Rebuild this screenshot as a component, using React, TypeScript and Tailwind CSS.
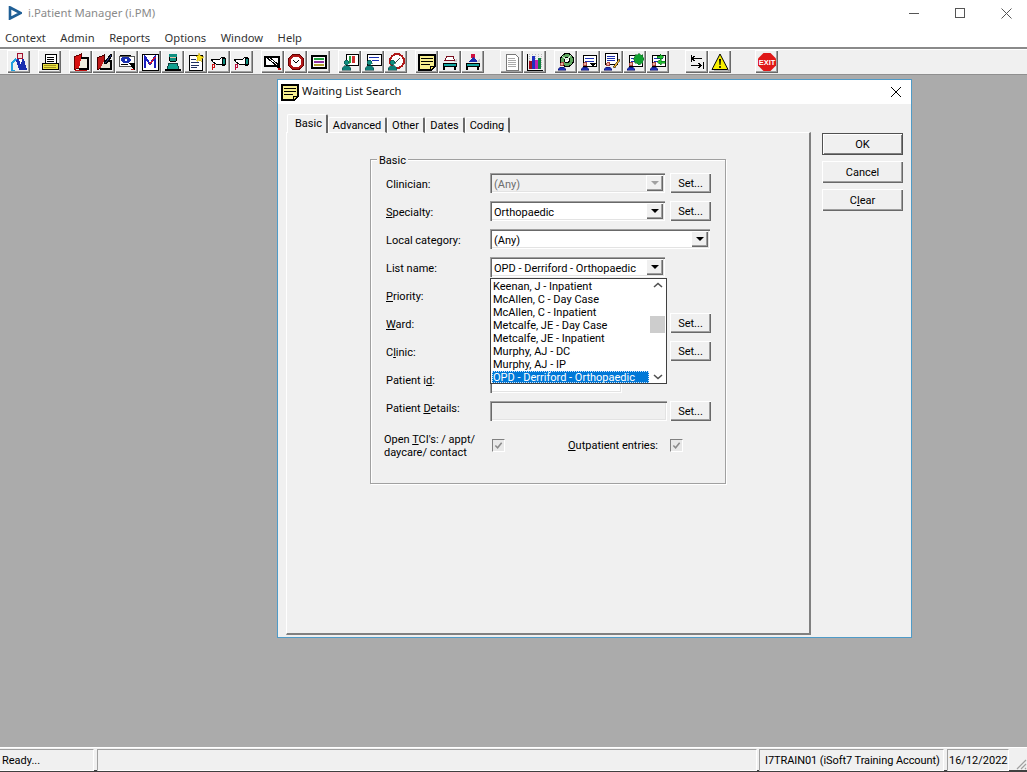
import React from "react";

const FONT = "font-['Roboto',sans-serif] text-[11px] leading-[13px] text-black";
const RAISED = "shadow-[inset_1px_1px_0_#fff,inset_-1px_-1px_0_#696969,inset_-2px_-2px_0_#a0a0a0]";
const SUNKEN = "shadow-[inset_1px_1px_0_#a0a0a0,inset_2px_2px_0_#696969,inset_-1px_-1px_0_#fff,inset_-2px_-2px_0_#e3e3e3]";

const S = ({ children }: { children: React.ReactNode }) => (
  <svg viewBox="0 0 18 18" width="18" height="18" className="block" shapeRendering="crispEdges">{children}</svg>
);
const Teal = () => (
  <g>
    <circle cx="5.5" cy="9.5" r="2.5" fill="#0f8f80" stroke="#0b3d3d" strokeWidth=".5" />
    <path d="M1 17c0-3 2-4.500 4.500-4.500S10 14 10 17z" fill="#0f7f78" stroke="#0b3d3d" strokeWidth=".5" />
  </g>
);
const BlueP = () => (
  <g>
    <circle cx="5" cy="11" r="2" fill="#e8b0a0" stroke="#800000" strokeWidth=".6" />
    <path d="M1 17c0-2 2-3 4-3s4 1 4 3z" fill="#1a2fb0" stroke="#000060" strokeWidth=".5" />
  </g>
);
const Form = () => (
  <g>
    <rect x="3" y="2" width="13" height="11" fill="#fff" stroke="#000" />
    <path d="M5 5h9M5 8h9" stroke="#1a2fb0" />
  </g>
);
const Hand = ({ c }: { c: string }) => (
  <g>
    <path d="M1 6h9l2-2h2v8h-2l-2-1H6L3 9z" fill="#fff" stroke="#000" />
    <rect x="12" y="5" width="3" height="6" fill="#0f8f80" stroke="#000" />
    <path d="M2 11v6M2 11h2v3H2" stroke={c} fill="none" />
  </g>
);
const Bed = () => (
  <g>
    <path d="M2 10h13v3H2z" fill="#12a5a0" stroke="#000" />
    <path d="M3 13v4M14 13v4" stroke="#000" strokeWidth="1.500" />
    <path d="M12 9l4-3v3z" fill="#c8c8c8" />
  </g>
);

const icons: React.ReactNode[] = [
  <S><rect x="7" y="0" width="5" height="5" fill="#f4dcdc" stroke="#a01030" /><path d="M5 6h9l3 11H9L7 10z" fill="#1a2fb0" /><path d="M9 6h3l-1 6z" fill="#fff" /><path d="M2 17V10l4-4" stroke="#22a0e0" fill="none" strokeWidth="1.500" /><path d="M1 17h4" stroke="#22a0e0" /></S>,
  <S><rect x="4" y="1" width="11" height="9" fill="#fff" stroke="#000" /><path d="M6 4h7M6 6h7M6 8h7" stroke="#000" /><path d="M1 10h16v6H1z" fill="#e8e040" stroke="#000" /><path d="M3 12h12M3 14h12" stroke="#a09020" /></S>,
  <S><path d="M2 4l7-3v13l-7 3z" fill="#d81010" stroke="#600" /><path d="M9 5h7v11H7" fill="#f0f0e0" stroke="#000" strokeWidth="1.500" /><path d="M3 17h12" stroke="#c01010" /></S>,
  <S><path d="M2 5l7-3v12l-7 3z" fill="#c01818" stroke="#400" /><path d="M9 8h7v8H5" fill="#e8e0d0" stroke="#000" strokeWidth="1.500" /><path d="M9 10l7-9 1 2-6 8z" fill="#203070" stroke="#000" /></S>,
  <S><rect x="1" y="3" width="15" height="10" fill="#fff" stroke="#555" /><ellipse cx="8" cy="7" rx="5" ry="3.500" fill="#1a2fb0" /><circle cx="8" cy="7" r="1.500" fill="#fff" /><path d="M2 2h11M3 11h7M11 10h5v7" stroke="#000" /><path d="M13 16h3" stroke="#d01010" /></S>,
  <S><rect x="1" y="1" width="16" height="16" fill="#fff" stroke="#000" /><path d="M4 15V4l5 7 5-7v11" fill="none" stroke="#1a20c0" strokeWidth="2" /><path d="M9 11l5-7" stroke="#d01030" strokeWidth="1.500" /></S>,
  <S><circle cx="9" cy="5" r="4" fill="#e8c0a8" stroke="#000" /><rect x="5" y="1" width="8" height="3" fill="#0f8f80" /><rect x="6" y="5" width="6" height="3" fill="#0f8f80" /><path d="M3 16l2-6h8l2 6z" fill="#12a090" stroke="#0b3d3d" /><path d="M1 17h16" stroke="#000" strokeWidth="1.500" /></S>,
  <S><rect x="2" y="2" width="13" height="15" fill="#fff" stroke="#000" /><path d="M4 6h5M4 9h8M4 12h8M4 14h6" stroke="#203060" /><path d="M12 0l1.500 3 3.500 1-3 2 .5 3-3-2-2 1 1-3-2-2 3-.5z" fill="#f8e020" stroke="#c0a000" strokeWidth=".5" /></S>,
  <S><Hand c="#d01010" /></S>,
  <S><Hand c="#c01040" /></S>,
  <S><path d="M1 4h14v9H1z" fill="#fff" stroke="#000" strokeWidth="1.500" /><path d="M2 4l11 9M4 3l12 10" stroke="#000" /><path d="M13 13l3 3" stroke="#000" strokeWidth="1.500" /><rect x="14" y="15" width="3" height="2" fill="#d01010" /></S>,
  <S><circle cx="9" cy="9" r="8" fill="#b01818" stroke="#600" /><circle cx="9" cy="9" r="5.500" fill="#fff" /><path d="M6 7l3 3 3-3" fill="none" stroke="#000" shapeRendering="auto" /></S>,
  <S><rect x="2" y="3" width="14" height="12" fill="#fff" stroke="#000" strokeWidth="1.500" /><rect x="4" y="5" width="10" height="2" fill="#20a040" /><rect x="4" y="8" width="10" height="2" fill="#9030a0" /><rect x="4" y="11" width="10" height="2" fill="#b0a030" /></S>,
  <S><rect x="5" y="1" width="12" height="11" fill="#fff" stroke="#000" /><rect x="8" y="3" width="2" height="7" fill="#20a040" /><rect x="11" y="3" width="3" height="7" fill="#d03030" /><Teal /></S>,
  <S><rect x="3" y="1" width="14" height="11" fill="#fff" stroke="#000" /><path d="M5 4h10M8 7h7" stroke="#1a2fb0" /><Teal /></S>,
  <S><circle cx="10" cy="8" r="7" fill="#fff" stroke="#b01818" strokeWidth="2" /><path d="M8 10l5-5" stroke="#404040" strokeWidth="1.200" /><Teal /></S>,
  <S><path d="M1 2h16v11l-4 4H1z" fill="#f8f090" stroke="#000" strokeWidth="1.500" /><path d="M3 5h12M3 8h12M3 11h9" stroke="#000" /><path d="M12 17v-4h5" fill="#f0e060" stroke="#000" /></S>,
  <S><path d="M5 5V3h7v2l2 2H4z" fill="#fff" stroke="#7a1020" /><Bed /></S>,
  <S><circle cx="9" cy="3" r="2.500" fill="#d01040" /><path d="M4 9l5-5 5 5z" fill="#1a2fb0" /><Bed /></S>,
  <S><path d="M3 1h9l3 3v13H3z" fill="#fff" stroke="#777" /><path d="M5 5h7M5 7h8M5 9h8M5 11h8M5 13h8" stroke="#aaa" /></S>,
  <S><path d="M1 1v16h16" stroke="#000" fill="none" /><path d="M3 1v14M6 1v14M9 1v14M12 1v14M15 1v14" stroke="#bbb" strokeDasharray="1 1" /><rect x="3" y="8" width="3" height="8" fill="#a01020" /><rect x="6" y="3" width="3" height="13" fill="#2030c0" /><rect x="9" y="7" width="3" height="9" fill="#c020b0" /><rect x="12" y="5" width="3" height="11" fill="#108040" /></S>,
  <S><circle cx="10" cy="7" r="6.500" fill="#60a860" stroke="#000" /><circle cx="10" cy="7" r="2.500" fill="#fff" stroke="#000" /><path d="M5 3l5 4 4-5" stroke="#c8e8c8" fill="none" /><BlueP /></S>,
  <S><Form /><path d="M9 10h7l-3 4z" fill="#000" /><BlueP /></S>,
  <S><rect x="2" y="0" width="12" height="11" fill="#fff" stroke="#000" /><path d="M4 3h8M4 5h8M4 7h8" stroke="#1a2fb0" /><path d="M10 14l6-8 1 1-5 8z" fill="#e8b030" stroke="#000" strokeWidth=".5" /><BlueP /></S>,
  <S><Form /><path d="M13 0l1.500 2 2-.5.5 2.500 1 2-1 2-.5 2-2 .5-1.500 1.500-2-1.500-2-.5-.5-2-1-2 1-2 .5-2.500 2 .5z" fill="#10a030" stroke="#106020" strokeWidth=".5" /><BlueP /></S>,
  <S><Form /><path d="M11 1l4 3-4 3V5H8V3h3z" fill="#20c030" stroke="#006010" strokeWidth=".5" /><path d="M12 6L8 9l4 3v-2h4V8h-4z" fill="#20c030" stroke="#006010" strokeWidth=".5" /><BlueP /></S>,
  <S><path d="M3 2v7M3 5.500h11M3 5.500l4-2.500M3 5.500l4 2.500" stroke="#000" fill="none" /><path d="M15 9v7M3 12.500h11M14 12.500l-4-2.500M14 12.500l-4 2.500" stroke="#000" fill="none" /></S>,
  <svg viewBox="0 0 18 18" width="18" height="18" className="block"><path d="M9 1l8 15.500H1z" fill="#f8f000" stroke="#000" /><path d="M8 6h2l-.5 6h-1z" fill="#000" /><circle cx="9" cy="14" r="1" fill="#000" /><path d="M17 16.500l1 1.500H3" stroke="#888" fill="none" /></svg>,
  <svg viewBox="0 0 18 18" width="18" height="18" className="block"><path d="M5.500 0h7L18 5.500v7L12.500 18h-7L0 12.500v-7z" fill="#e01818" /><text x="9" y="11.500" textAnchor="middle" fontSize="7.500" fontWeight="700" fill="#fff" fontFamily="Liberation Sans">EXIT</text></svg>,
];

const groups: [number, number][] = [
  [1, 0], [1, 8], [8, 8], [3, 8], [3, 8], [3, 8], [2, 16], [5, 8], [2, 16], [1, 24],
];

function Toolbar() {
  let i = 0;
  return (
    <div className="h-[28px] shrink-0 bg-[#f0f0f0] border-t-2 border-t-[#8a8a8a] border-b border-b-[#8f8f8f] flex items-start pt-[1px] pl-[7px] shadow-[inset_0_1px_0_#fff]">
      {groups.map(([n, gap], g) => (
        <div key={g} className="flex" style={{ marginLeft: gap }}>
          {Array.from({ length: n }).map(() => {
            const ic = icons[i++];
            return (
              <div key={i} className={`w-[23px] h-[23px] flex items-center justify-center ${RAISED}`}>{ic}</div>
            );
          })}
        </div>
      ))}
    </div>
  );
}

const U = ({ children }: { children: string }) => <span className="underline">{children}</span>;

function Arrow({ disabled }: { disabled?: boolean }) {
  return (
    <span className={`w-[17px] h-[16px] flex items-center justify-center bg-[#f0f0f0] ${RAISED}`}>
      <span className={`w-0 h-0 border-x-[4px] border-x-transparent border-t-[4px] ${disabled ? "border-t-[#a0a0a0]" : "border-t-black"}`} />
    </span>
  );
}

function Combo({ value, disabled, wide }: { value?: string; disabled?: boolean; wide?: boolean }) {
  return (
    <div className={`${wide ? "w-[220px]" : "w-[175px]"} h-[20px] flex items-center justify-between pl-[4px] pr-[2px] ${disabled ? "bg-[#f0f0f0] text-[#6d6d6d]" : "bg-white"} ${SUNKEN}`}>
      <span className="pt-[3px] whitespace-nowrap">{value}</span>
      <Arrow disabled={disabled} />
    </div>
  );
}

const SetBtn = () => (
  <div className={`w-[41px] h-[20px] ml-[5px] flex items-center justify-center bg-[#f0f0f0] ${RAISED}`}>Set...</div>
);

function Row({ label, children }: { label: React.ReactNode; children?: React.ReactNode }) {
  return (
    <div className="flex h-[20px] items-center">
      <div className="w-[119px] pl-[15px] pt-[3px] shrink-0 whitespace-nowrap">{label}</div>
      {children}
    </div>
  );
}

const Check = () => (
  <div className="w-[13px] h-[13px] bg-[#e8e8e8] border border-t-[#808080] border-l-[#808080] border-b-white border-r-white flex items-center justify-center">
    <svg viewBox="0 0 10 10" width="9" height="9"><path d="M1.500 5l2.500 2.500L8.500 2" fill="none" stroke="#8a8a8a" strokeWidth="1.700" /></svg>
  </div>
);

const listItems = [
  "Keenan, J - Inpatient", "McAllen, C - Day Case", "McAllen, C - Inpatient", "Metcalfe, JE - Day Case",
  "Metcalfe, JE - Inpatient", "Murphy, AJ - DC", "Murphy, AJ - IP",
];

function Dropdown() {
  return (
    <div className="absolute left-[119px] top-[118px] w-[177px] h-[106px] bg-white border border-[#404040] flex">
      <div className="w-[158px] pl-[1px] pt-[1px]">
        {listItems.map((t) => (
          <div key={t} className="h-[13px] pl-[1px] whitespace-nowrap">{t}</div>
        ))}
        <div className="h-[12px] pl-[1px] bg-[#0078d7] text-white whitespace-nowrap outline-1 outline-dotted outline-[#cfe6ff] -outline-offset-1">OPD - Derriford - Orthopaedic</div>
      </div>
      <div className="w-[17px] flex flex-col items-center justify-between py-[3px] relative">
        <svg viewBox="0 0 10 6" width="10" height="6"><path d="M1 5l4-3.500L9 5" fill="none" stroke="#505050" strokeWidth="1.600" /></svg>
        <div className="absolute left-[1px] top-[37px] w-[15px] h-[17px] bg-[#cdcdcd]" />
        <svg viewBox="0 0 10 6" width="10" height="6"><path d="M1 1l4 3.500L9 1" fill="none" stroke="#505050" strokeWidth="1.600" /></svg>
      </div>
    </div>
  );
}

function GroupBox() {
  return (
    <div className="relative ml-[83px] mt-[26px] w-[356px] h-[325px] border border-[#a0a0a0] shadow-[inset_1px_1px_0_#fff,1px_1px_0_#fff] pt-[13px]">
      <div className="absolute left-[6px] -top-[6px] bg-[#f0f0f0] px-[2px]">Basic</div>
      <div className="flex flex-col gap-[8px]">
        <Row label="Clinician:"><Combo value="(Any)" disabled /><SetBtn /></Row>
        <Row label={<><U>S</U>pecialty:</>}><Combo value="Orthopaedic" /><SetBtn /></Row>
        <Row label={<>Local category:</>}><Combo value="(Any)" wide /></Row>
        <Row label="List name:"><Combo value="OPD - Derriford - Orthopaedic" /></Row>
        <Row label={<><U>P</U>riority:</>}><Combo /></Row>
        <Row label={<><U>W</U>ard:</>}><Combo /><SetBtn /></Row>
        <Row label={<>C<U>l</U>inic:</>}><Combo /><SetBtn /></Row>
        <Row label={<>Patient i<U>d</U>:</>}><div className={`w-[132px] h-[20px] mt-[8px] bg-white ${SUNKEN}`} /></Row>
        <Row label={<>Patient <U>D</U>etails:</>}>
          <div className={`w-[177px] h-[20px] mt-[8px] bg-[#f0f0f0] ${SUNKEN}`} />
          <div className="mt-[8px] flex -ml-[2px]"><SetBtn /></div>
        </Row>
      </div>
      <div className="flex mt-[16px] pl-[13px]">
        <div className="w-[108px]">Open <U>T</U>CI's: / appt/<br />daycare/ contact</div>
        <div className="mt-[6px]"><Check /></div>
        <div className="ml-[63px] mt-[6px] w-[102px] whitespace-nowrap"><U>O</U>utpatient entries:</div>
        <div className="mt-[6px]"><Check /></div>
      </div>
      <Dropdown />
    </div>
  );
}

function Tabs() {
  const inactive = [
    ["Advanced", "w-[59px]"], ["Other", "w-[38px]"], ["Dates", "w-[40px]"], ["Coding", "w-[45px]"],
  ];
  return (
    <div className="flex items-end h-[19px] pl-[1px] relative z-10">
      <div className="w-[41px] h-[19px] pt-[2px] pl-[7px] bg-[#f0f0f0] border-l border-t border-l-white border-t-white border-r-2 border-r-[#696969] rounded-t-[2px]">Basic</div>
      {inactive.map(([t, w]) => (
        <div key={t} className={`${w} h-[16px] pt-[1px] text-center bg-[#f0f0f0] border-l border-t border-l-white border-t-white border-r-2 border-r-[#696969] border-b border-b-white rounded-t-[2px]`}>{t}</div>
      ))}
    </div>
  );
}

const DlgBtn = ({ children, def }: { children: React.ReactNode; def?: boolean }) => (
  <div className={`w-[81px] h-[22px] flex items-center justify-center bg-[#f0f0f0] ${RAISED} ${def ? "outline outline-1 -outline-offset-1 outline-[#505050] shadow-[inset_2px_2px_0_#fff,inset_-2px_-2px_0_#808080]" : ""}`}>{children}</div>
);

function Dialog() {
  return (
    <div className={`absolute left-[277px] top-[4px] w-[635px] h-[559px] border border-[#4f9bc8] bg-[#f0f0f0] flex flex-col ${FONT}`}>
      <div className="h-[24px] bg-white flex items-center pl-[3px] shrink-0">
        <svg viewBox="0 0 18 18" width="18" height="18" shapeRendering="crispEdges"><path d="M1 2h16v11l-4 4H1z" fill="#f8f090" stroke="#000" strokeWidth="1.500" /><path d="M3 5h12M3 8h12M3 11h9" stroke="#000" /><path d="M12 17v-4h5" fill="#f0e060" stroke="#000" /></svg>
        <span className="ml-[3px] pb-[3px] font-['Noto_Sans',sans-serif] text-[11.2px] text-[#111]">Waiting List Search</span>
        <svg className="ml-auto mr-[9px]" viewBox="0 0 12 12" width="12" height="12"><path d="M1 1l10 10M11 1L1 11" stroke="#000" /></svg>
      </div>
      <div className="flex-1 flex pl-[8px] pt-[10px]">
        <div className="w-[525px]">
          <Tabs />
          <div className="h-[503px] -mt-[1px] bg-[#f0f0f0] border-t border-l border-t-white border-l-white border-r-2 border-b-2 border-r-[#808080] border-b-[#808080] overflow-hidden">
            <GroupBox />
          </div>
        </div>
        <div className="ml-[11px] pt-[19px] flex flex-col gap-[6px]">
          <DlgBtn def>OK</DlgBtn>
          <DlgBtn>Cancel</DlgBtn>
          <DlgBtn>C<U>l</U>ear</DlgBtn>
        </div>
      </div>
    </div>
  );
}

function StatusBar() {
  const panel = "h-[22px] flex items-center border border-t-[#a0a0a0] border-l-[#a0a0a0] border-r-white border-b-white whitespace-nowrap";
  return (
    <div className={`h-[25px] shrink-0 bg-[#f0f0f0] border-t border-t-[#fff] border-b-2 border-b-[#404040] flex items-start pt-[1px] relative ${FONT}`}>
      <div className={`${panel} w-[94px] pl-[2px] border-l-0`}>Ready...</div>
      <div className={`${panel} w-[660px] ml-[3px]`} />
      <div className={`${panel} w-[185px] ml-[2px] pl-[5px] tracking-[-0.08px]`}>I7TRAIN01 (iSoft7 Training Account)</div>
      <div className={`${panel} w-[62px] ml-[3px] pl-[1px]`}>16/12/2022</div>
      <svg className="absolute right-0 bottom-0" viewBox="0 0 12 12" width="12" height="12"><path d="M11 2L2 11M11 6l-5 5M11 10l-1 1" stroke="#a0a0a0" strokeWidth="1.200" /></svg>
    </div>
  );
}

export default function App() {
  return (
    <div className="w-[1027px] h-[772px] flex flex-col overflow-hidden bg-[#ababab]">
      <div className="h-[30px] bg-white flex items-center pb-[4px] shrink-0 font-['Noto_Sans',sans-serif] text-[11.3px] text-[#8a8a8a]">
        <svg className="ml-[8px]" viewBox="0 0 14 14" width="14" height="14"><path d="M2 1.500L12.500 7 2 12.500z" fill="none" stroke="#1f5f96" strokeWidth="2.600" /></svg>
        <span className="ml-[6px]">i.Patient Manager (i.PM)</span>
        <div className="ml-auto flex items-center">
          <div className="w-[46px] flex justify-center"><svg width="10" height="10" viewBox="0 0 10 10"><path d="M0 5.500h10" stroke="#555" /></svg></div>
          <div className="w-[46px] mr-[2px] flex justify-center"><svg width="10" height="10" viewBox="0 0 10 10"><rect x=".5" y=".5" width="9" height="9" fill="none" stroke="#555" /></svg></div>
          <div className="w-[42px] flex justify-center"><svg width="11" height="11" viewBox="0 0 11 11"><path d="M.5.500l10 10M10.500.500l-10 10" stroke="#555" /></svg></div>
        </div>
      </div>
      <div className="h-[17px] bg-white flex items-center pl-[5px] gap-[14.5px] shrink-0 font-['Noto_Sans',sans-serif] text-[11.2px] text-[#333]">
        <span>Context</span><span>Admin</span><span>Reports</span><span>Options</span><span>Window</span><span>Help</span>
      </div>
      <Toolbar />
      <div className="flex-1 relative"><Dialog /></div>
      <StatusBar />
    </div>
  );
}
